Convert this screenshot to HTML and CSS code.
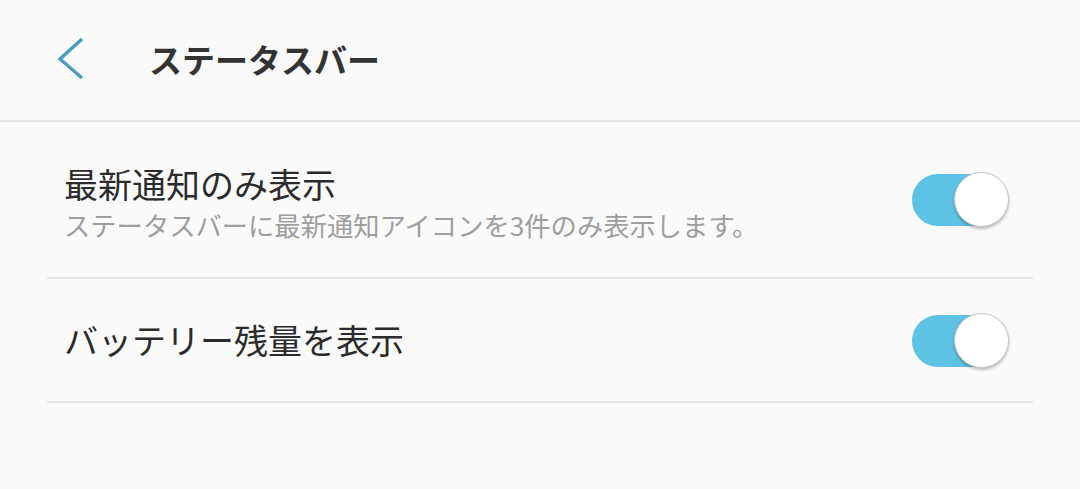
FILE: index.html
```html
<!DOCTYPE html>
<html lang="ja">
<head>
    <meta charset="UTF-8">
    <meta name="viewport" content="width=device-width, initial-scale=1.0">
    <title>ステータスバー</title>
    <link rel="stylesheet" href="styles.css">
</head>
<body>
    <header class="app-bar">
        <svg class="back-icon" width="35" height="50" viewBox="0 0 35 50" aria-label="戻る">
            <path d="M27 5 L5 25 L27 44" fill="none" stroke="#4a9ec0" stroke-width="3.4" stroke-linecap="butt" stroke-linejoin="miter"/>
        </svg>
        <h1>ステータスバー</h1>
    </header>

    <ul class="settings">
        <li class="setting setting-tall">
            <div class="setting-text">
                <div class="setting-title">最新通知のみ表示</div>
                <div class="setting-summary">ステータスバーに最新通知アイコンを3件のみ表示します。</div>
            </div>
            <span class="switch on"><span class="knob"></span></span>
        </li>
        <li class="setting">
            <div class="setting-text">
                <div class="setting-title">バッテリー残量を表示</div>
            </div>
            <span class="switch on"><span class="knob"></span></span>
        </li>
    </ul>
</body>
</html>
```

FILE: styles.css
```css
/* Basic reset */
html, body {
    margin: 0;
    padding: 0;
    box-sizing: border-box;
}

body {
    font-family: "Noto Sans CJK JP", "Noto Sans", sans-serif;
    background-color: #fafafa;
    color: #2b2b2b;
    width: 1080px;
    height: 489px;
    overflow: hidden;
}

/* Top bar */
.app-bar {
    display: flex;
    align-items: center;
    height: 122px;
    padding-left: 55px;
    border-bottom: 2px solid #e5e5e5;
    box-sizing: border-box;
}

.back-icon {
    display: block;
    margin-top: -2px;
}

.app-bar h1 {
    margin: -2px 0 0 59px;
    font-size: 33px;
    font-weight: 700;
    color: #333;
    line-height: 1;
}

/* Settings list */
.settings {
    list-style: none;
    margin: 0 47px;
    padding: 0;
}

.setting {
    display: flex;
    align-items: center;
    justify-content: space-between;
    min-height: 122px;
    padding: 0 24px 0 17px;
    border-bottom: 2px solid #e3e3e3;
}

.setting-tall {
    min-height: 155px;
}

.setting-tall .setting-text {
    padding-top: 6px;
}

.setting-title {
    font-size: 34px;
    line-height: 40px;
    color: #2b2b2b;
}

.setting-summary {
    margin-top: 5px;
    font-size: 26.3px;
    line-height: 32px;
    color: #9e9e9e;
}

/* Toggle switch */
.switch {
    position: relative;
    display: block;
    width: 97px;
    height: 55px;
    flex-shrink: 0;
}

.switch::before {
    content: '';
    position: absolute;
    left: 0;
    top: 2px;
    width: 90px;
    height: 52px;
    border-radius: 26px;
    background-color: #5ec2e5;
}

.switch .knob {
    position: absolute;
    right: 0;
    top: 0;
    width: 55px;
    height: 55px;
    border-radius: 50%;
    background-color: #fff;
    box-sizing: border-box;
    border: 1px solid #c4c4c4;
    box-shadow: 0 2px 3px rgba(0, 0, 0, 0.25);
}
```
